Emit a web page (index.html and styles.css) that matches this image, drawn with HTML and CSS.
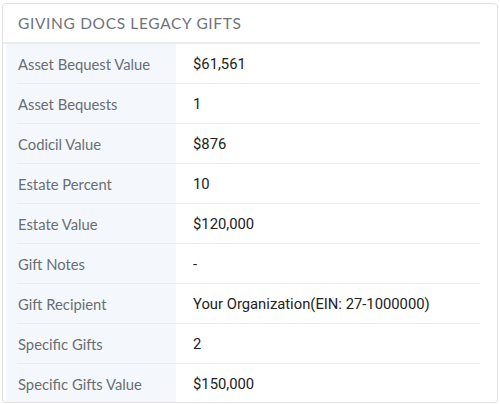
FILE: index.html
```html
<!DOCTYPE html>
<html>
<head>
<meta charset="utf-8">
<link rel="stylesheet" href="styles.css">
</head>
<body>
<div class="card">
  <div class="inner">
    <div class="header">GIVING DOCS LEGACY GIFTS</div>
    <div class="body">
      <div class="row"><div class="label">Asset Bequest Value</div><div class="value">$61,561</div></div>
      <div class="row"><div class="label">Asset Bequests</div><div class="value">1</div></div>
      <div class="row"><div class="label">Codicil Value</div><div class="value">$876</div></div>
      <div class="row"><div class="label">Estate Percent</div><div class="value">10</div></div>
      <div class="row"><div class="label">Estate Value</div><div class="value">$120,000</div></div>
      <div class="row"><div class="label">Gift Notes</div><div class="value">-</div></div>
      <div class="row"><div class="label">Gift Recipient</div><div class="value">Your Organization(EIN: 27-1000000)</div></div>
      <div class="row"><div class="label">Specific Gifts</div><div class="value">2</div></div>
      <div class="row last"><div class="label">Specific Gifts Value</div><div class="value">$150,000</div></div>
    </div>
  </div>
</div>
</body>
</html>
```

FILE: styles.css
```css
html, body { margin: 0; padding: 0; background: #fff; }
body { padding: 3px 2px 0 2px; }
.card {
  border: 1px solid #e2e2e2;
  border-radius: 4px;
  height: 398px;
  overflow: hidden;
  box-shadow: 0 1px 2px rgba(0,0,0,0.05);
  background: #fff;
}
.inner { margin-right: 17px; }
.header {
  height: 38px;
  line-height: 38px;
  padding-left: 15px;
  border-bottom: 2px solid #ececec;
  font-family: Lato, "Open Sans", sans-serif;
  font-size: 15.5px;
  letter-spacing: 0.65px;
  color: #6f7378;
}
.body {
  margin-left: 3px;
  background: linear-gradient(to right, #f4f8fd 170px, #fff 170px);
}
.row {
  margin-left: 11px;
  height: 39px;
  border-bottom: 1px solid #ececec;
  display: grid;
  grid-template-columns: 159px 1fr;
  align-items: center;
}
.row.last { border-bottom: none; }
.label {
  padding-left: 1px;
  font-family: Lato, "Open Sans", sans-serif;
  font-size: 14.8px;
  color: #6a6e72;
}
.value {
  padding-left: 17px;
  font-family: Roboto, "Noto Sans", sans-serif;
  font-size: 14.8px;
  color: #222;
}
```
